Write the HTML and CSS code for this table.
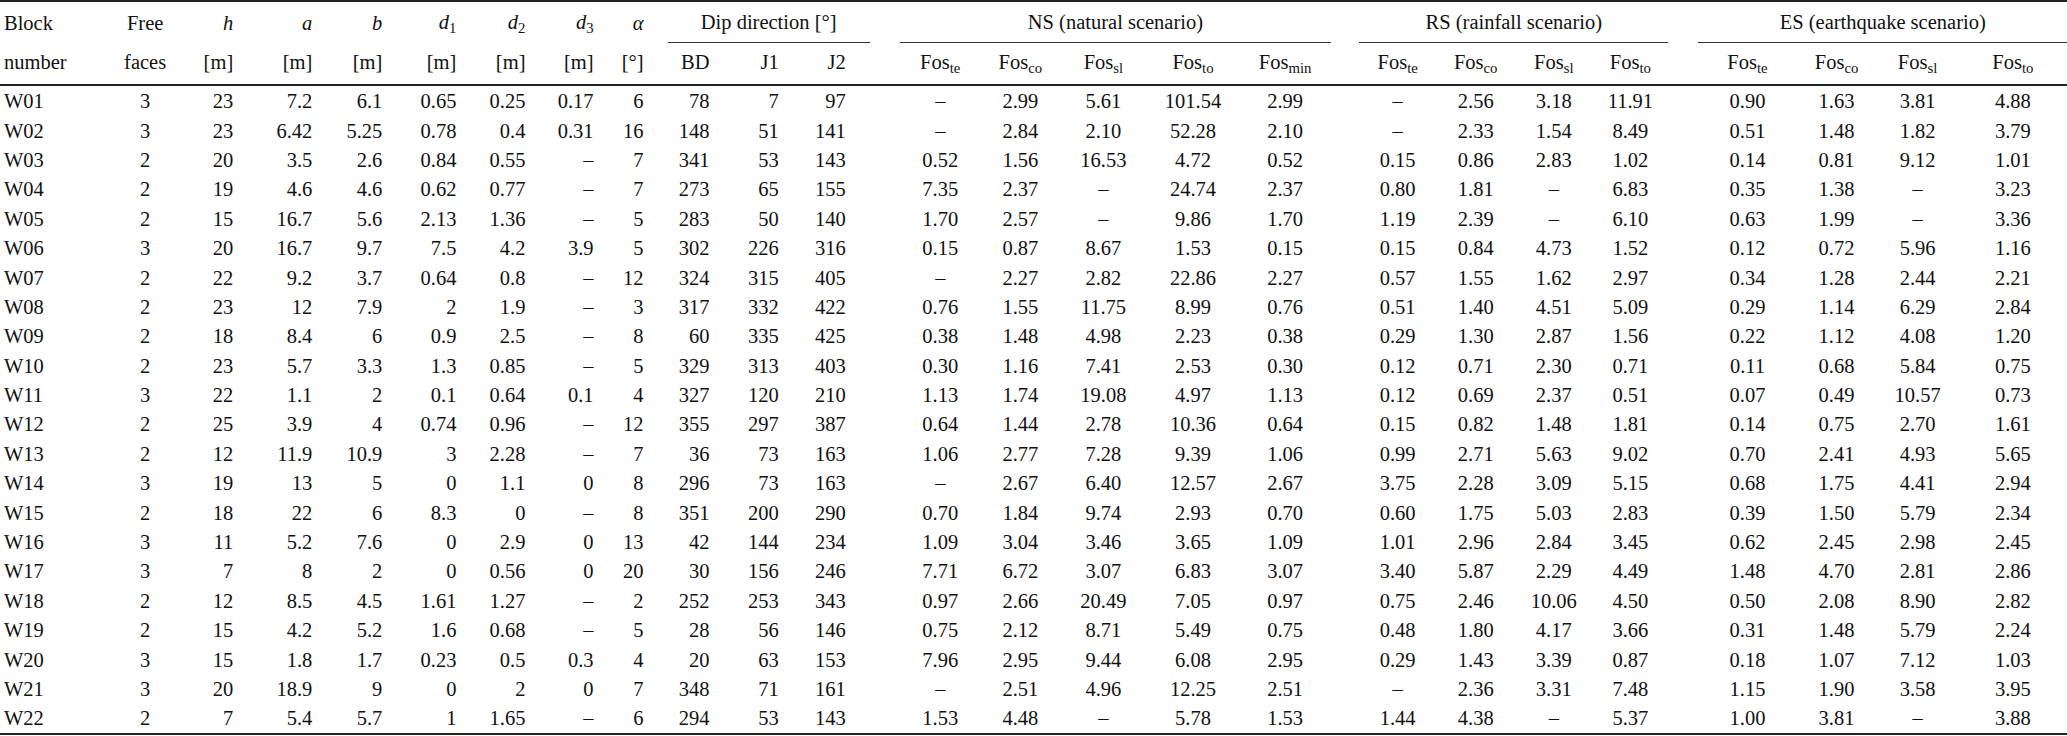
FILE: index.html
```html
<!DOCTYPE html>
<html>
<head>
<meta charset="utf-8">
<link rel="stylesheet" href="styles.css">
</head>
<body>
<table class="tbl">
<colgroup>
<col class="w110"><col class="w70"><col class="w77"><col class="w79"><col class="w70"><col class="w74"><col class="w69"><col class="w68"><col class="w50"><col class="w66"><col class="w69"><col class="w67">
<col class="w30">
<col class="w81"><col class="w79"><col class="w87"><col class="w92"><col class="w92">
<col class="w28">
<col class="w77"><col class="w79"><col class="w77"><col class="w76">
<col class="w30">
<col class="w98"><col class="w80"><col class="w82"><col class="w108">
</colgroup>
<thead>
<tr class="h1">
<th class="l">Block</th><th class="c">Free</th><th class="r"><i>h</i></th><th class="r"><i>a</i></th><th class="r"><i>b</i></th><th class="r"><i>d</i><span class="sd">1</span></th><th class="r"><i>d</i><span class="sd">2</span></th><th class="r"><i>d</i><span class="sd">3</span></th><th class="r"><i>α</i></th>
<th class="grp" colspan="3">Dip direction [°]</th><th></th>
<th class="grp" colspan="5">NS (natural scenario)</th><th></th>
<th class="grp" colspan="4">RS (rainfall scenario)</th><th></th>
<th class="grp" colspan="4">ES (earthquake scenario)</th>
</tr>
<tr class="h2">
<th>number</th><th>faces</th><th>[m]</th><th>[m]</th><th>[m]</th><th>[m]</th><th>[m]</th><th>[m]</th><th>[°]</th><th>BD</th><th>J1</th><th>J2</th><th></th>
<th>Fos<span class="s">te</span></th><th>Fos<span class="s">co</span></th><th>Fos<span class="s">sl</span></th><th>Fos<span class="s">to</span></th><th>Fos<span class="s">min</span></th><th></th>
<th>Fos<span class="s">te</span></th><th>Fos<span class="s">co</span></th><th>Fos<span class="s">sl</span></th><th>Fos<span class="s">to</span></th><th></th>
<th>Fos<span class="s">te</span></th><th>Fos<span class="s">co</span></th><th>Fos<span class="s">sl</span></th><th>Fos<span class="s">to</span></th>
</tr>
</thead>
<tbody>
<tr><td>W01</td><td>3</td><td>23</td><td>7.2</td><td>6.1</td><td>0.65</td><td>0.25</td><td>0.17</td><td>6</td><td>78</td><td>7</td><td>97</td><td></td><td>–</td><td>2.99</td><td>5.61</td><td>101.54</td><td>2.99</td><td></td><td>–</td><td>2.56</td><td>3.18</td><td>11.91</td><td></td><td>0.90</td><td>1.63</td><td>3.81</td><td>4.88</td></tr>
<tr><td>W02</td><td>3</td><td>23</td><td>6.42</td><td>5.25</td><td>0.78</td><td>0.4</td><td>0.31</td><td>16</td><td>148</td><td>51</td><td>141</td><td></td><td>–</td><td>2.84</td><td>2.10</td><td>52.28</td><td>2.10</td><td></td><td>–</td><td>2.33</td><td>1.54</td><td>8.49</td><td></td><td>0.51</td><td>1.48</td><td>1.82</td><td>3.79</td></tr>
<tr><td>W03</td><td>2</td><td>20</td><td>3.5</td><td>2.6</td><td>0.84</td><td>0.55</td><td>–</td><td>7</td><td>341</td><td>53</td><td>143</td><td></td><td>0.52</td><td>1.56</td><td>16.53</td><td>4.72</td><td>0.52</td><td></td><td>0.15</td><td>0.86</td><td>2.83</td><td>1.02</td><td></td><td>0.14</td><td>0.81</td><td>9.12</td><td>1.01</td></tr>
<tr><td>W04</td><td>2</td><td>19</td><td>4.6</td><td>4.6</td><td>0.62</td><td>0.77</td><td>–</td><td>7</td><td>273</td><td>65</td><td>155</td><td></td><td>7.35</td><td>2.37</td><td>–</td><td>24.74</td><td>2.37</td><td></td><td>0.80</td><td>1.81</td><td>–</td><td>6.83</td><td></td><td>0.35</td><td>1.38</td><td>–</td><td>3.23</td></tr>
<tr><td>W05</td><td>2</td><td>15</td><td>16.7</td><td>5.6</td><td>2.13</td><td>1.36</td><td>–</td><td>5</td><td>283</td><td>50</td><td>140</td><td></td><td>1.70</td><td>2.57</td><td>–</td><td>9.86</td><td>1.70</td><td></td><td>1.19</td><td>2.39</td><td>–</td><td>6.10</td><td></td><td>0.63</td><td>1.99</td><td>–</td><td>3.36</td></tr>
<tr><td>W06</td><td>3</td><td>20</td><td>16.7</td><td>9.7</td><td>7.5</td><td>4.2</td><td>3.9</td><td>5</td><td>302</td><td>226</td><td>316</td><td></td><td>0.15</td><td>0.87</td><td>8.67</td><td>1.53</td><td>0.15</td><td></td><td>0.15</td><td>0.84</td><td>4.73</td><td>1.52</td><td></td><td>0.12</td><td>0.72</td><td>5.96</td><td>1.16</td></tr>
<tr><td>W07</td><td>2</td><td>22</td><td>9.2</td><td>3.7</td><td>0.64</td><td>0.8</td><td>–</td><td>12</td><td>324</td><td>315</td><td>405</td><td></td><td>–</td><td>2.27</td><td>2.82</td><td>22.86</td><td>2.27</td><td></td><td>0.57</td><td>1.55</td><td>1.62</td><td>2.97</td><td></td><td>0.34</td><td>1.28</td><td>2.44</td><td>2.21</td></tr>
<tr><td>W08</td><td>2</td><td>23</td><td>12</td><td>7.9</td><td>2</td><td>1.9</td><td>–</td><td>3</td><td>317</td><td>332</td><td>422</td><td></td><td>0.76</td><td>1.55</td><td>11.75</td><td>8.99</td><td>0.76</td><td></td><td>0.51</td><td>1.40</td><td>4.51</td><td>5.09</td><td></td><td>0.29</td><td>1.14</td><td>6.29</td><td>2.84</td></tr>
<tr><td>W09</td><td>2</td><td>18</td><td>8.4</td><td>6</td><td>0.9</td><td>2.5</td><td>–</td><td>8</td><td>60</td><td>335</td><td>425</td><td></td><td>0.38</td><td>1.48</td><td>4.98</td><td>2.23</td><td>0.38</td><td></td><td>0.29</td><td>1.30</td><td>2.87</td><td>1.56</td><td></td><td>0.22</td><td>1.12</td><td>4.08</td><td>1.20</td></tr>
<tr><td>W10</td><td>2</td><td>23</td><td>5.7</td><td>3.3</td><td>1.3</td><td>0.85</td><td>–</td><td>5</td><td>329</td><td>313</td><td>403</td><td></td><td>0.30</td><td>1.16</td><td>7.41</td><td>2.53</td><td>0.30</td><td></td><td>0.12</td><td>0.71</td><td>2.30</td><td>0.71</td><td></td><td>0.11</td><td>0.68</td><td>5.84</td><td>0.75</td></tr>
<tr><td>W11</td><td>3</td><td>22</td><td>1.1</td><td>2</td><td>0.1</td><td>0.64</td><td>0.1</td><td>4</td><td>327</td><td>120</td><td>210</td><td></td><td>1.13</td><td>1.74</td><td>19.08</td><td>4.97</td><td>1.13</td><td></td><td>0.12</td><td>0.69</td><td>2.37</td><td>0.51</td><td></td><td>0.07</td><td>0.49</td><td>10.57</td><td>0.73</td></tr>
<tr><td>W12</td><td>2</td><td>25</td><td>3.9</td><td>4</td><td>0.74</td><td>0.96</td><td>–</td><td>12</td><td>355</td><td>297</td><td>387</td><td></td><td>0.64</td><td>1.44</td><td>2.78</td><td>10.36</td><td>0.64</td><td></td><td>0.15</td><td>0.82</td><td>1.48</td><td>1.81</td><td></td><td>0.14</td><td>0.75</td><td>2.70</td><td>1.61</td></tr>
<tr><td>W13</td><td>2</td><td>12</td><td>11.9</td><td>10.9</td><td>3</td><td>2.28</td><td>–</td><td>7</td><td>36</td><td>73</td><td>163</td><td></td><td>1.06</td><td>2.77</td><td>7.28</td><td>9.39</td><td>1.06</td><td></td><td>0.99</td><td>2.71</td><td>5.63</td><td>9.02</td><td></td><td>0.70</td><td>2.41</td><td>4.93</td><td>5.65</td></tr>
<tr><td>W14</td><td>3</td><td>19</td><td>13</td><td>5</td><td>0</td><td>1.1</td><td>0</td><td>8</td><td>296</td><td>73</td><td>163</td><td></td><td>–</td><td>2.67</td><td>6.40</td><td>12.57</td><td>2.67</td><td></td><td>3.75</td><td>2.28</td><td>3.09</td><td>5.15</td><td></td><td>0.68</td><td>1.75</td><td>4.41</td><td>2.94</td></tr>
<tr><td>W15</td><td>2</td><td>18</td><td>22</td><td>6</td><td>8.3</td><td>0</td><td>–</td><td>8</td><td>351</td><td>200</td><td>290</td><td></td><td>0.70</td><td>1.84</td><td>9.74</td><td>2.93</td><td>0.70</td><td></td><td>0.60</td><td>1.75</td><td>5.03</td><td>2.83</td><td></td><td>0.39</td><td>1.50</td><td>5.79</td><td>2.34</td></tr>
<tr><td>W16</td><td>3</td><td>11</td><td>5.2</td><td>7.6</td><td>0</td><td>2.9</td><td>0</td><td>13</td><td>42</td><td>144</td><td>234</td><td></td><td>1.09</td><td>3.04</td><td>3.46</td><td>3.65</td><td>1.09</td><td></td><td>1.01</td><td>2.96</td><td>2.84</td><td>3.45</td><td></td><td>0.62</td><td>2.45</td><td>2.98</td><td>2.45</td></tr>
<tr><td>W17</td><td>3</td><td>7</td><td>8</td><td>2</td><td>0</td><td>0.56</td><td>0</td><td>20</td><td>30</td><td>156</td><td>246</td><td></td><td>7.71</td><td>6.72</td><td>3.07</td><td>6.83</td><td>3.07</td><td></td><td>3.40</td><td>5.87</td><td>2.29</td><td>4.49</td><td></td><td>1.48</td><td>4.70</td><td>2.81</td><td>2.86</td></tr>
<tr><td>W18</td><td>2</td><td>12</td><td>8.5</td><td>4.5</td><td>1.61</td><td>1.27</td><td>–</td><td>2</td><td>252</td><td>253</td><td>343</td><td></td><td>0.97</td><td>2.66</td><td>20.49</td><td>7.05</td><td>0.97</td><td></td><td>0.75</td><td>2.46</td><td>10.06</td><td>4.50</td><td></td><td>0.50</td><td>2.08</td><td>8.90</td><td>2.82</td></tr>
<tr><td>W19</td><td>2</td><td>15</td><td>4.2</td><td>5.2</td><td>1.6</td><td>0.68</td><td>–</td><td>5</td><td>28</td><td>56</td><td>146</td><td></td><td>0.75</td><td>2.12</td><td>8.71</td><td>5.49</td><td>0.75</td><td></td><td>0.48</td><td>1.80</td><td>4.17</td><td>3.66</td><td></td><td>0.31</td><td>1.48</td><td>5.79</td><td>2.24</td></tr>
<tr><td>W20</td><td>3</td><td>15</td><td>1.8</td><td>1.7</td><td>0.23</td><td>0.5</td><td>0.3</td><td>4</td><td>20</td><td>63</td><td>153</td><td></td><td>7.96</td><td>2.95</td><td>9.44</td><td>6.08</td><td>2.95</td><td></td><td>0.29</td><td>1.43</td><td>3.39</td><td>0.87</td><td></td><td>0.18</td><td>1.07</td><td>7.12</td><td>1.03</td></tr>
<tr><td>W21</td><td>3</td><td>20</td><td>18.9</td><td>9</td><td>0</td><td>2</td><td>0</td><td>7</td><td>348</td><td>71</td><td>161</td><td></td><td>–</td><td>2.51</td><td>4.96</td><td>12.25</td><td>2.51</td><td></td><td>–</td><td>2.36</td><td>3.31</td><td>7.48</td><td></td><td>1.15</td><td>1.90</td><td>3.58</td><td>3.95</td></tr>
<tr><td>W22</td><td>2</td><td>7</td><td>5.4</td><td>5.7</td><td>1</td><td>1.65</td><td>–</td><td>6</td><td>294</td><td>53</td><td>143</td><td></td><td>1.53</td><td>4.48</td><td>–</td><td>5.78</td><td>1.53</td><td></td><td>1.44</td><td>4.38</td><td>–</td><td>5.37</td><td></td><td>1.00</td><td>3.81</td><td>–</td><td>3.88</td></tr>
</tbody>
</table>
</body>
</html>
```

FILE: styles.css
```css
html, body {
  margin: 0;
  padding: 0;
  background: #fff;
}

.tbl {
  table-layout: fixed;
  width: 2067px;
  border-collapse: separate;
  border-spacing: 0;
  border-top: 2px solid #222;
  border-bottom: 2px solid #222;
  font-family: "Liberation Serif", "Times New Roman", serif;
  font-size: 20.5px;
  color: #111;
}

.w110 { width: 110px; }
.w108 { width: 108px; }
.w98 { width: 98px; }
.w92 { width: 92px; }
.w87 { width: 87px; }
.w82 { width: 82px; }
.w81 { width: 81px; }
.w80 { width: 80px; }
.w79 { width: 79px; }
.w77 { width: 77px; }
.w76 { width: 76px; }
.w74 { width: 74px; }
.w70 { width: 70px; }
.w69 { width: 69px; }
.w68 { width: 68px; }
.w67 { width: 67px; }
.w66 { width: 66px; }
.w50 { width: 50px; }
.w30 { width: 30px; }
.w28 { width: 28px; }

.tbl th,
.tbl td {
  padding: 0;
  font-weight: normal;
  white-space: nowrap;
  overflow: visible;
}

.tbl i {
  font-style: italic;
}

/* header row 1 */
.h1 th {
  height: 40px;
  line-height: 24px;
  vertical-align: middle;
  text-align: center;
}

.h1 th.l { text-align: left; padding-left: 4px; }
.h1 th.c { text-align: center; }
.h1 th.r { text-align: right; padding-right: 24px; }

.h1 th.grp {
  border-bottom: 1px solid #333;
  text-align: center;
}

/* header row 2 */
.h2 th {
  height: 43px;
  line-height: 24px;
  vertical-align: top;
  padding-top: 7px;
  border-bottom: 2px solid #222;
  box-sizing: border-box;
}

/* body */
.tbl td {
  height: 28.4px;
  line-height: 24px;
  vertical-align: middle;
  padding-top: 1px;
}

.h2 th:nth-child(1),
.tbl td:nth-child(1) {
  text-align: left;
  padding-left: 4px;
}

.h2 th:nth-child(2),
.tbl td:nth-child(2) {
  text-align: center;
}

.h2 th:nth-child(n+3):nth-child(-n+12),
.tbl td:nth-child(n+3):nth-child(-n+12) {
  text-align: right;
  padding-right: 24px;
}

.h2 th:nth-child(n+13),
.tbl td:nth-child(n+13) {
  text-align: center;
}

.s {
  font-size: 0.72em;
  position: relative;
  top: 0.3em;
}

.sd {
  font-size: 0.72em;
  position: relative;
  top: 0.28em;
  font-style: normal;
}
```
